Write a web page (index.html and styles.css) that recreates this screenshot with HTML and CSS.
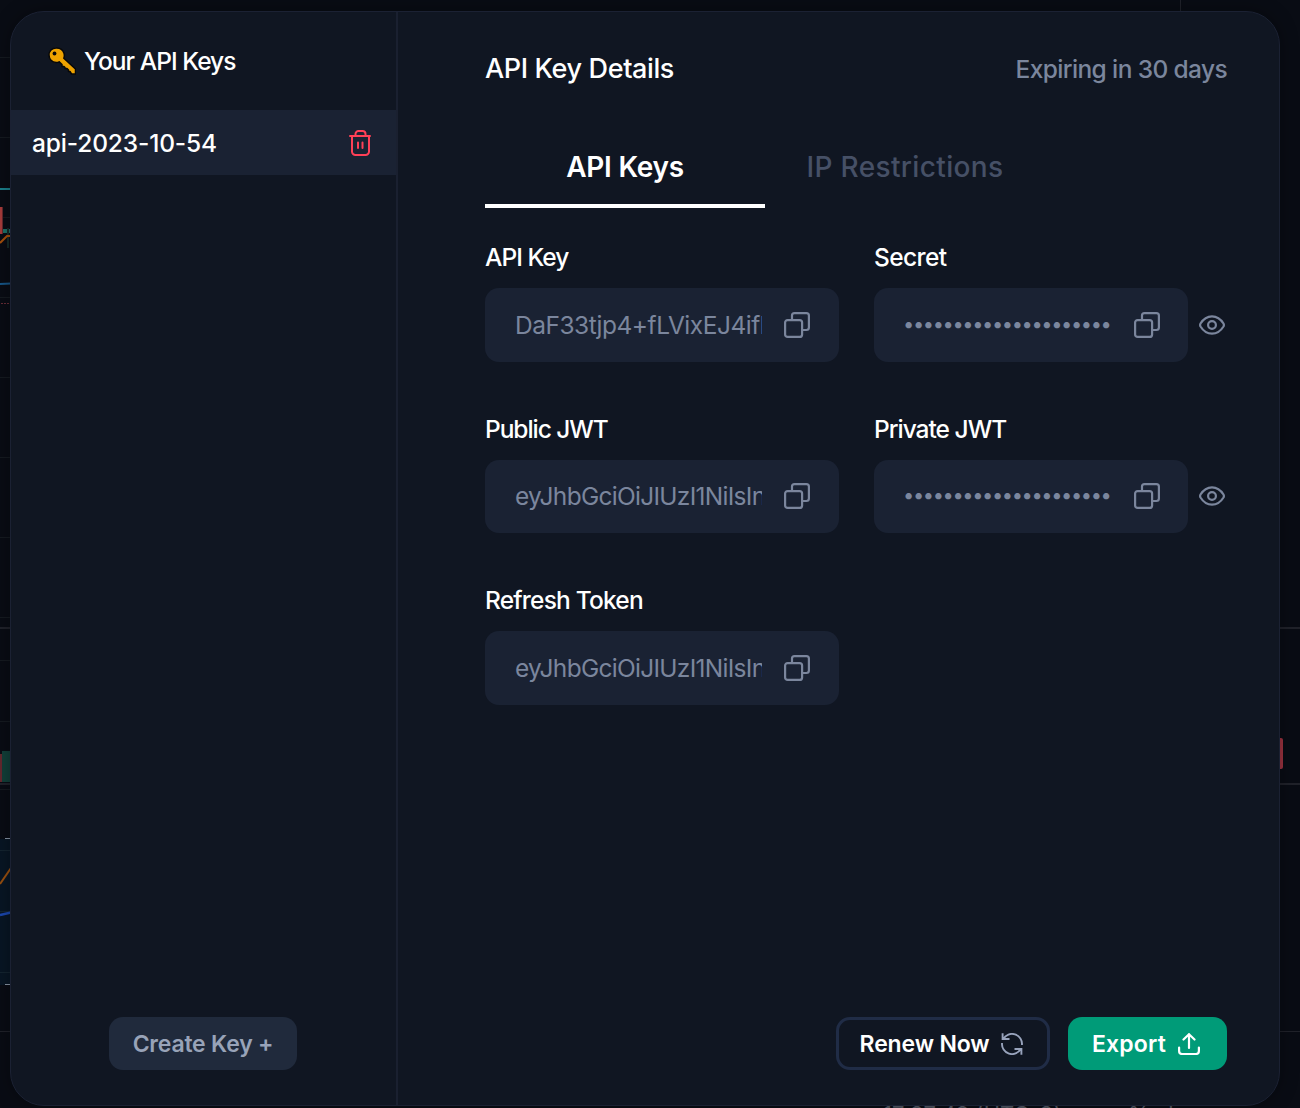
FILE: index.html
```html
<!DOCTYPE html>
<html lang="en">
<head>
<meta charset="utf-8">
<title>API Keys</title>
<link rel="stylesheet" href="styles.css">
</head>
<body>
<svg class="chart" width="1300" height="1108" viewBox="0 0 1300 1108" fill="none" aria-hidden="true">
  <path stroke="#151a20" d="M0 57.500H11M0 137.500H11M0 217.500H11M0 297.500H11M0 377.500H11M0 457.500H11M0 537.500H11M0 617.500H11M0 660.500H11M0 721.500H11M0 789.500H11"/>
  <path stroke="#20222a" stroke-width="2" d="M0 628H11M0 784H11M1280 628H1300M1280 784H1300"/>
  <path fill="#081624" d="M0 839H11V985H0z"/>
  <path stroke="#142430" d="M0 850.500H11M0 911.500H11M0 972.500H11"/>
  <path stroke="#20222a" d="M0 1031.500H11M1280 1031.500H1300M1180.500 0V11"/>
  <path stroke="#1b7f8b" stroke-width="2" d="M0 189H11"/>
  <path fill="#a83c3b" d="M0 207h2v27H0z"/><path fill="#64282c" d="M2 207h1v27H2z"/>
  <path fill="#1d7168" d="M3 229h8v4H3z"/><path fill="#142a28" d="M7 228h2v20H7z"/>
  <path stroke="#a6500c" stroke-width="2" d="M0 243L7 236H11"/>
  <path stroke="#175687" stroke-width="2" d="M0 284L11 283.500"/>
  <path stroke="#672c36" stroke-dasharray="2 1" d="M1 303.500H10"/>
  <path fill="#64282f" d="M0 754h2v28H0z"/><path fill="#123f39" d="M2 751h9v31H2z"/>
  <path stroke="#8793a3" d="M5 838.500H11M5 984.500H11"/>
  <path stroke="#9a500f" stroke-width="2" d="M0 884L11 868"/>
  <path stroke="#1b47ad" stroke-width="2.500" d="M0 915L11 912.500"/>
  <rect x="1270" y="738" width="13" height="31" rx="2" fill="#9d3340"/>
</svg>
<div class="clock">17:37:49 (UTC-3)</div>
<div class="scale">%&nbsp;&nbsp; log</div>

<svg width="0" height="0" class="defs" aria-hidden="true">
  <symbol id="copy" viewBox="0 0 26 26"><g fill="none" stroke="currentColor" stroke-width="2.200"><rect x="1.100" y="8.100" width="17" height="16.800" rx="2.500"/><path d="M8 8V3.600A2.500 2.500 0 0 1 10.500 1.100H22.400A2.500 2.500 0 0 1 24.900 3.600V15.500A2.500 2.500 0 0 1 22.400 18H18"/></g></symbol>
  <symbol id="eye" viewBox="0 0 26 20"><g fill="none" stroke="currentColor" stroke-width="2.200"><path d="M1.500 11.500Q.7 10 1.500 8.500Q6 1.300 13 1.300T24.500 8.500Q25.300 10 24.500 11.500Q20 18.700 13 18.700T1.500 11.500z"/><circle cx="13" cy="10" r="3.900"/></g></symbol>
</svg>

<main class="dialog">
  <aside class="sidebar">
    <header class="side-head">
      <svg class="key" width="28" height="28" viewBox="0 0 28 28"><path d="M8 1C4 1 1 4 1 8s3 7.500 7.200 7.500c1.200 0 2.200-.2 3-.7L14 17.500v2h2l1 1v1h2l1.500 1.500V24.500h1.500l1.500 2.500h4v-5L15.800 11.200C16.500 9.500 16.600 8.500 16.100 6.500A8 8 0 0 0 8 1z" fill="#eea200" stroke="#080808" stroke-width="1.500" stroke-linejoin="round"/><circle cx="6.500" cy="6.500" r="1.900" fill="#080808"/></svg>
      <h2 class="side-title">Your API Keys</h2>
    </header>
    <div class="key-row">
      <span class="key-name">api-2023-10-54</span>
      <svg class="trash" width="22" height="26" viewBox="0 0 22 26" fill="none" stroke="currentColor" stroke-width="2" stroke-linecap="round" stroke-linejoin="round"><path d="M1 6H21M3 6V21.500A3.500 3.500 0 0 0 6.500 25H16.500A3.500 3.500 0 0 0 20 21.500V6M6.500 6V4A3 3 0 0 1 9.500 1H13.500A3 3 0 0 1 16.500 4V6M9 12.500V18M13.500 12.500V18"/></svg>
    </div>
    <button class="btn create">Create Key +</button>
  </aside>
  <section class="details">
    <header class="detail-head">
      <h1 class="title">API Key Details</h1>
      <span class="expiry">Expiring in 30 days</span>
    </header>
    <nav class="tabs">
      <div class="tab active"><span class="tab-main">API Keys</span></div>
      <div class="tab"><span class="tab-other">IP Restrictions</span></div>
    </nav>
    <div class="fields">
      <div class="field">
        <label class="label l-api">API Key</label>
        <div class="box"><span class="value v-key">DaF33tjp4+fLVixEJ4ifh</span><svg class="copy"><use href="#copy"/></svg></div>
      </div>
      <div class="field">
        <label class="label l-secret">Secret</label>
        <div class="line"><div class="box"><span class="value dots">•••••••••••••••••••••</span><svg class="copy"><use href="#copy"/></svg></div><svg class="eye"><use href="#eye"/></svg></div>
      </div>
      <div class="field">
        <label class="label l-public">Public JWT</label>
        <div class="box"><span class="value v-jwt">eyJhbGciOiJIUzI1NiIsInR5</span><svg class="copy"><use href="#copy"/></svg></div>
      </div>
      <div class="field">
        <label class="label l-private">Private JWT</label>
        <div class="line"><div class="box"><span class="value dots">•••••••••••••••••••••</span><svg class="copy"><use href="#copy"/></svg></div><svg class="eye"><use href="#eye"/></svg></div>
      </div>
      <div class="field">
        <label class="label l-refresh">Refresh Token</label>
        <div class="box"><span class="value v-jwt">eyJhbGciOiJIUzI1NiIsInR5</span><svg class="copy"><use href="#copy"/></svg></div>
      </div>
    </div>
    <footer class="actions">
      <button class="btn renew"><span>Renew Now</span><svg width="22" height="22" viewBox="0 0 22 22" fill="none" stroke="#98a3bc" stroke-width="1.900"><path d="M1.600 .3V6H8.500M2.300 6A10 10 0 0 1 20.950 12M20.400 21.700V16H13.500M19.700 16A10 10 0 0 1 1.050 10"/></svg></button>
      <button class="btn export"><span>Export</span><svg width="22" height="22" viewBox="0 0 22 22" fill="none" stroke="#fff" stroke-width="2.200" stroke-linecap="round" stroke-linejoin="round"><path d="M11 15V1.200M5.500 6.500L11 1.200L16.500 6.500M1.100 14.500V18A3 3 0 0 0 4.100 21H17.900A3 3 0 0 0 20.900 18V14.500"/></svg></button>
    </footer>
  </section>
</main>
</body>
</html>
```
FILE: styles.css
```css
* { box-sizing: border-box; }
body {
  margin: 0;
  height: 1108px;
  padding: 11px 20px 2px 10px;
  overflow: hidden;
  background: #090c14;
  color: #fff;
  font-family: Inter, "Liberation Sans", sans-serif;
}
h1, h2 { margin: 0; font-weight: 540; }
svg { flex: none; display: block; }
.defs, .chart, .clock, .scale { position: absolute; }
.chart { left: 0; top: 0; }
.clock, .scale { top: 1101px; font-size: 22px; line-height: 26px; color: #555a66; white-space: nowrap; }
.clock { left: 883px; }
.scale { left: 1128px; }

.dialog {
  position: relative;
  display: flex;
  height: 1095px;
  border: 1px solid #1b2133;
  border-radius: 34px;
  background: #101622;
  box-shadow: 0 0 18px rgba(0, 0, 0, .35);
  overflow: hidden;
}
.sidebar {
  flex: none;
  width: 387px;
  border-right: 2px solid #1a2030;
  display: flex;
  flex-direction: column;
}
.side-head { height: 98px; padding-left: 38px; display: flex; align-items: center; gap: 7px; }
.key { margin-left: -1px; margin-right: 1px; }
.side-title, .key-name, .label { font-size: 24.500px; line-height: 32px; white-space: nowrap; }
.side-title { letter-spacing: -.95px; }
.key-row {
  height: 65px;
  padding: 1px 25px 0 21px;
  display: flex;
  align-items: center;
  justify-content: space-between;
  background: #1a2233;
}
.key-name { font-weight: 550; letter-spacing: -.15px; }
.trash { color: #ff4057; }
.btn {
  height: 53px;
  border: 0;
  border-radius: 14px;
  color: #fff;
  font: 600 23px/28px Inter, "Liberation Sans", sans-serif;
  display: flex;
  align-items: center;
  justify-content: center;
  white-space: nowrap;
  padding: 0;
}
.create { width: 188px; margin: auto 0 35px 98px; background: #202a3c; color: #98a3b8; letter-spacing: -.2px; }

.details { flex: 1; min-width: 0; padding: 40px 52px 35px 87px; display: flex; flex-direction: column; }
.detail-head { flex: none; height: 33px; display: flex; align-items: center; justify-content: space-between; white-space: nowrap; }
.title { font-size: 27px; letter-spacing: -.38px; }
.expiry { font-size: 24.500px; font-weight: 450; letter-spacing: -.62px; color: #7b869d; }
.tabs { display: flex; margin-top: 51px; }
.tab {
  width: 280px;
  height: 72px;
  padding: 3px 0 10px;
  border-bottom: 4px solid transparent;
  display: flex;
  align-items: center;
  justify-content: center;
  font-size: 28px;
  font-weight: 600;
  color: #465066;
  white-space: nowrap;
}
.active { color: #fff; border-color: #fff; }
.tab-main { letter-spacing: -.25px; }
.tab-other { font-weight: 550; letter-spacing: .35px; }

.fields {
  margin-top: 33px;
  display: grid;
  grid-template-columns: 354px 354px;
  grid-auto-rows: 121px;
  column-gap: 35px;
  row-gap: 50.500px;
}
.label { display: block; font-weight: 540; margin-bottom: 15px; }
.l-api { letter-spacing: -.98px; }
.l-secret { letter-spacing: -.6px; }
.l-public { letter-spacing: -1.05px; }
.l-private { letter-spacing: -1px; }
.l-refresh { letter-spacing: -.8px; }
.box {
  height: 73.500px;
  border-radius: 14px;
  background: #1a2233;
  color: #7b869d;
  display: flex;
  align-items: center;
  justify-content: space-between;
  padding: 0 28px 0 30px;
  min-width: 0;
}
.field > .box { padding-right: 29px; }
.value { width: 247px; overflow: hidden; white-space: nowrap; font-size: 24.500px; line-height: 34px; }
.v-key { letter-spacing: -.48px; }
.v-jwt { letter-spacing: -.72px; }
.copy { width: 26px; height: 26px; }
.line { display: flex; align-items: center; gap: 11px; }
.line .box { width: 314px; padding-left: 29px; }
.line .value { width: 211px; font-size: 20px; letter-spacing: -1.370px; line-height: 32px; padding-bottom: 2px; }
.eye { width: 26px; height: 20px; color: #7b869d; }

.actions { margin-top: auto; display: flex; justify-content: flex-end; gap: 18px; }
.renew { width: 214px; border: 3px solid #202c46; background: transparent; gap: 12px; letter-spacing: -.15px; padding-right: 3px; }
.export { width: 159px; background: #009b78; gap: 12px; letter-spacing: .2px; padding-right: 3px; }
```
